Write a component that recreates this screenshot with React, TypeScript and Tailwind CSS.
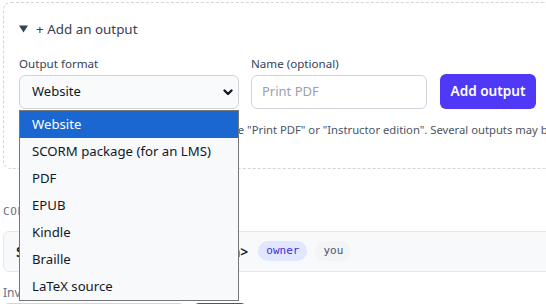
import React from "react";

const items = ["Website", "SCORM package (for an LMS)", "PDF", "EPUB", "Kindle", "Braille", "LaTeX source"];
const mono = { fontFamily: '"DejaVu Sans Mono", monospace' };

export default function App() {
  return (
    <div
      className="relative w-[546px] h-[304px] overflow-hidden bg-white pl-[3px] pt-[2px] text-gray-800"
      style={{ fontFamily: '"Noto Sans", "Open Sans", sans-serif' }}
    >
      <div className="w-[600px] rounded-lg border border-dashed border-gray-300 pl-[15px] pt-4 pb-[29px]">
        <div className="flex items-center h-5 text-[13.4px] text-gray-700">
          <svg width="9" height="8" viewBox="0 0 9 8" className="mr-[8px]">
            <polygon points="0,0.5 9,0.5 4.5,7.5" fill="#374151" />
          </svg>
          <span>+ Add an output</span>
        </div>
        <div className="mt-4 flex items-end">
          <div className="flex flex-col">
            <label className="text-[11.6px] leading-[18px] mb-[2px] text-gray-700">Output format</label>
            <div className="flex items-center justify-between w-[220px] h-[34px] rounded-md border border-gray-300 bg-gray-50 pl-3 pr-[4px] text-[13px] text-gray-900">
              <span>Website</span>
              <svg width="12" height="12" viewBox="0 0 12 12" fill="none" stroke="#111827" strokeWidth="2.4" strokeLinecap="round" strokeLinejoin="round">
                <path d="M2.5 4.5 L6 8 L9.5 4.5" />
              </svg>
            </div>
          </div>
          <div className="ml-3 flex flex-col">
            <label className="text-[11.6px] leading-[18px] mb-[2px] text-gray-700">Name (optional)</label>
            <div className="flex items-center w-[176px] h-[34px] rounded-md border border-gray-300 bg-white px-[10px] text-[13px] text-gray-400">
              Print PDF
            </div>
          </div>
          <button className="ml-[13px] w-[96px] h-[35px] rounded-md bg-indigo-600 text-[13.6px] font-semibold text-white">Add output</button>
        </div>
        <p className="mt-3 text-[11.25px] leading-[18px] text-gray-600 whitespace-nowrap">
          Optional name for the output, for example "Print PDF" or "Instructor edition". Several outputs may be added.
        </p>
      </div>

      <div className="mt-[35px] text-[11px] uppercase tracking-wider text-gray-500" style={mono}>
        Collaborators
      </div>

      <div className="mt-[10px] flex w-[600px] h-[41px] items-center gap-2 rounded-l-md border border-gray-200 bg-[#f8f9fa] pl-3">
        <span className="text-[14px] font-semibold text-gray-900">Sam Okafor &lt;sam@example.com&gt;</span>
        <span className="ml-[2px] rounded-full bg-indigo-100 px-2 py-[2px] text-[11px] text-indigo-700" style={mono}>owner</span>
        <span className="rounded-full bg-gray-100 px-2 py-[2px] text-[11px] text-gray-600" style={mono}>you</span>
      </div>

      <div className="mt-[12px] text-[12px] text-gray-500">Invite a collaborator by email address</div>
      <div className="mt-[1px] flex gap-2">
        <div className="w-[182px] h-[30px] rounded-md border border-gray-300" />
        <div className="w-[54px] h-[30px] rounded-md bg-indigo-600" />
      </div>

      <div className="absolute left-[19px] top-[110px] w-[220px] border border-[#767676] bg-[#f8f9fb]">
        {items.map((it, i) => (
          <div
            key={it}
            className={
              "flex h-[27px] items-center pl-3 text-[13.2px] " +
              (i === 0 ? "bg-[#1a67d2] text-white" : "text-gray-900")
            }
          >
            {it}
          </div>
        ))}
      </div>
    </div>
  );
}
